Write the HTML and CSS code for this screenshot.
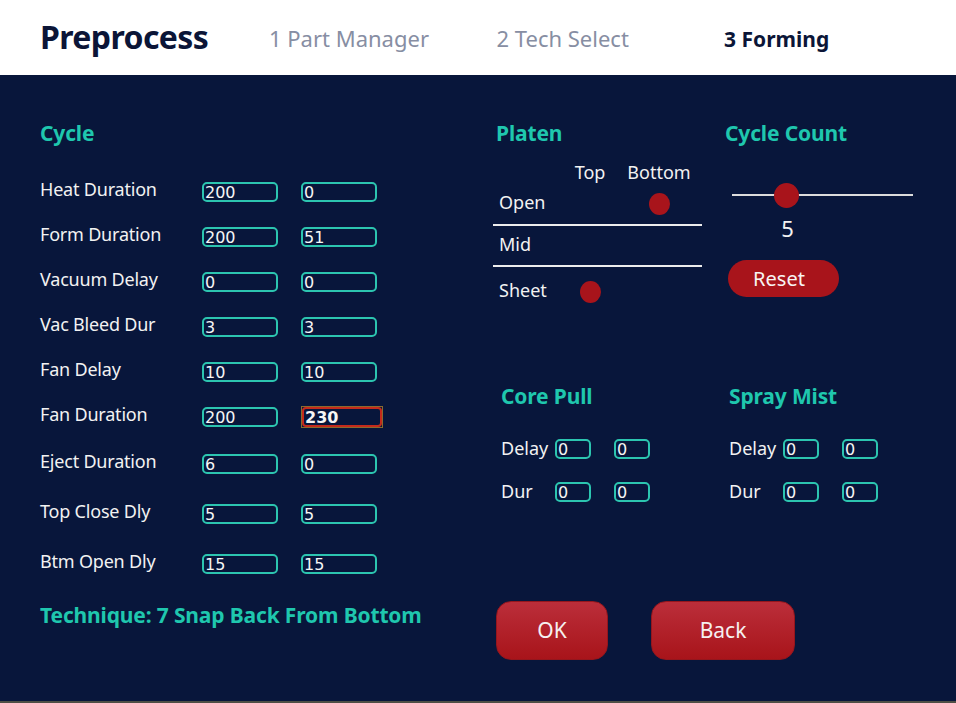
FILE: index.html
```html
<!DOCTYPE html>
<html lang="en">
<head>
<meta charset="utf-8">
<title>Preprocess - Forming</title>
<link rel="stylesheet" href="styles.css">
</head>
<body>
<header class="topbar">
  <h1 class="brand">Preprocess</h1>
  <nav class="steps">
    <span class="step">1 Part Manager</span>
    <span class="step">2 Tech Select</span>
    <span class="step step-active">3 Forming</span>
  </nav>
</header>
<main class="panel">
  <section class="cycle">
    <h2 class="section-title">Cycle</h2>
    <div class="cycle-rows">
      <div class="field-row"><span class="field-label">Heat Duration</span><input class="num" value="200" readonly><input class="num" value="0" readonly></div>
      <div class="field-row"><span class="field-label">Form Duration</span><input class="num" value="200" readonly><input class="num" value="51" readonly></div>
      <div class="field-row"><span class="field-label">Vacuum Delay</span><input class="num" value="0" readonly><input class="num" value="0" readonly></div>
      <div class="field-row"><span class="field-label">Vac Bleed Dur</span><input class="num" value="3" readonly><input class="num" value="3" readonly></div>
      <div class="field-row"><span class="field-label">Fan Delay</span><input class="num" value="10" readonly><input class="num" value="10" readonly></div>
      <div class="field-row"><span class="field-label">Fan Duration</span><input class="num" value="200" readonly><span class="focus-ring"><input class="num num-focus" value="230" readonly></span></div>
      <div class="field-row gap-m"><span class="field-label">Eject Duration</span><input class="num" value="6" readonly><input class="num" value="0" readonly></div>
      <div class="field-row gap-l"><span class="field-label">Top Close Dly</span><input class="num" value="5" readonly><input class="num" value="5" readonly></div>
      <div class="field-row gap-l"><span class="field-label">Btm Open Dly</span><input class="num" value="15" readonly><input class="num" value="15" readonly></div>
    </div>
    <p class="technique">Technique: 7 Snap Back From Bottom</p>
  </section>

  <div class="right">
    <section class="platen">
      <h2 class="section-title">Platen</h2>
      <div class="platen-head">
        <span></span><span class="col-title">Top</span><span class="col-title">Bottom</span>
      </div>
      <div class="platen-row row-open">
        <span class="platen-label">Open</span><span></span><span class="dot"></span>
      </div>
      <div class="platen-line line-1"></div>
      <div class="platen-row row-mid">
        <span class="platen-label">Mid</span>
      </div>
      <div class="platen-line line-2"></div>
      <div class="platen-row row-sheet">
        <span class="platen-label">Sheet</span><span class="dot"></span>
      </div>
    </section>

    <section class="count">
      <h2 class="section-title">Cycle Count</h2>
      <div class="slider"><span class="thumb"></span></div>
      <div class="count-value">5</div>
      <button class="reset-btn" type="button">Reset</button>
    </section>

    <section class="mini mini-core">
      <h2 class="section-title">Core Pull</h2>
      <div class="mini-rows">
        <div class="mini-row"><span class="mini-label">Delay</span><input class="num num-sm" value="0" readonly><input class="num num-sm" value="0" readonly></div>
        <div class="mini-row"><span class="mini-label">Dur</span><input class="num num-sm" value="0" readonly><input class="num num-sm" value="0" readonly></div>
      </div>
    </section>

    <section class="mini mini-spray">
      <h2 class="section-title">Spray Mist</h2>
      <div class="mini-rows">
        <div class="mini-row"><span class="mini-label">Delay</span><input class="num num-sm" value="0" readonly><input class="num num-sm" value="0" readonly></div>
        <div class="mini-row"><span class="mini-label">Dur</span><input class="num num-sm" value="0" readonly><input class="num num-sm" value="0" readonly></div>
      </div>
    </section>

    <div class="actions">
      <button class="big-btn btn-ok" type="button">OK</button>
      <button class="big-btn btn-back" type="button">Back</button>
    </div>
  </div>
</main>
</body>
</html>
```
FILE: styles.css
```css
* { box-sizing: border-box; }

html, body {
  margin: 0;
  padding: 0;
}

body {
  width: 956px;
  height: 703px;
  background: #4e4e45;
  font-family: "Noto Sans", "Open Sans", sans-serif;
  overflow: hidden;
}

/* ---------- header ---------- */
.topbar {
  height: 75px;
  background: #ffffff;
  display: flex;
  align-items: flex-start;
  padding: 17px 0 0 40px;
}

.brand {
  width: 229px;
  margin: 0;
  font-size: 32px;
  line-height: 40px;
  font-weight: 700;
  letter-spacing: -0.6px;
  color: #0b1537;
}

.steps {
  display: flex;
}

.step {
  width: 227.5px;
  margin-top: 7px;
  font-size: 22px;
  line-height: 28px;
  color: #878ea3;
}

.step-active {
  font-size: 21px;
  margin-top: 7.5px;
  font-weight: 700;
  color: #0b1537;
}

/* ---------- panel ---------- */
.panel {
  height: 626px;
  background: #08163b;
  display: flex;
  padding: 46px 0 0 40px;
  color: #f2f2f2;
}

.section-title {
  margin: 0;
  font-size: 21px;
  line-height: 24px;
  font-weight: 700;
  letter-spacing: -0.15px;
  color: #1fc7ae;
}

/* ---------- cycle ---------- */
.cycle {
  width: 456px;
}

.cycle-rows {
  margin-top: 37px;
  display: flex;
  flex-direction: column;
  gap: 25px;
}

.field-row {
  display: flex;
  align-items: flex-start;
  height: 20px;
}

.gap-m { margin-top: 2px; }
.gap-l { margin-top: 5px; }

.field-label {
  width: 162px;
  margin-top: -3px;
  font-size: 18px;
  line-height: 20px;
  letter-spacing: -0.2px;
}

.num {
  width: 76px;
  height: 20px;
  margin: 0;
  padding: 0 1px;
  border: 2px solid #2cc5b0;
  border-radius: 5px;
  background: transparent;
  color: #f6f6f6;
  font-family: "DejaVu Sans", sans-serif;
  font-size: 16px;
  outline: none;
}

.num + .num,
.num + .focus-ring {
  margin-left: 23px;
}

.focus-ring {
  display: flex;
  margin-top: -1px;
  border: 1px solid #8a6a2e;
}

.num-focus {
  width: 80px;
  border-color: #c52a1b;
  border-radius: 4px;
  font-weight: 700;
}

.technique {
  margin: 29px 0 0;
  font-size: 21px;
  line-height: 24px;
  font-weight: 700;
  letter-spacing: -0.15px;
  color: #1fc7ae;
}

/* ---------- right area ---------- */
.right {
  display: grid;
  grid-template-columns: 229px 210px;
  align-content: start;
}

/* platen */
.platen-head,
.platen-row {
  display: grid;
  grid-template-columns: 59px 70px 68px;
}

.platen-head {
  margin-top: 16px;
  font-size: 18px;
  line-height: 22px;
  height: 22px;
}

.col-title {
  text-align: center;
}

.platen-row {
  height: 26px;
  font-size: 18px;
  line-height: 26px;
}

.platen-label {
  padding-left: 3px;
}

.row-open { margin-top: 6px; }
.row-mid { margin-top: 5px; }
.row-sheet { margin-top: 10px; }

.dot {
  justify-self: center;
  align-self: end;
  width: 21px;
  height: 22px;
  border-radius: 50%;
  background: #a8141b;
}

.platen-line {
  width: 209px;
  height: 2px;
  margin-left: -3px;
  background: #ececec;
}

.line-1 { margin-top: 9px; }
.line-2 { margin-top: 8px; }

/* cycle count */
.slider {
  position: relative;
  width: 181px;
  height: 2px;
  margin: 49px 0 0 7px;
  background: #dcdcdc;
}

.thumb {
  position: absolute;
  left: 42px;
  top: -11.5px;
  width: 25px;
  height: 25px;
  border-radius: 50%;
  background: #a8141b;
}

.count-value {
  width: 125px;
  margin-top: 19px;
  text-align: center;
  font-size: 22px;
  line-height: 26px;
}

.reset-btn {
  display: block;
  width: 111px;
  height: 37px;
  margin: 19px 0 0 3px;
  padding: 0 9px 0 0;
  border: none;
  border-radius: 18.5px;
  background: #a8141b;
  color: #f8f4f4;
  font-family: "Noto Sans", sans-serif;
  font-size: 20px;
  line-height: 33px;
  text-align: center;
}

/* core pull / spray mist */
.mini {
  margin-top: 81px;
}

.mini-core { padding-left: 5px; }
.mini-spray { padding-left: 4px; }

.mini-rows {
  margin-top: 31px;
  display: flex;
  flex-direction: column;
  gap: 23px;
}

.mini-row {
  display: flex;
  align-items: flex-start;
  height: 20px;
}

.mini-label {
  width: 54px;
  margin-top: -1px;
  font-size: 18px;
  line-height: 20px;
}

.num-sm {
  width: 36px;
}

/* actions */
.actions {
  grid-column: 1 / -1;
  margin-top: 99px;
  display: flex;
  gap: 43px;
}

.big-btn {
  height: 59px;
  padding: 0;
  border: 1px solid #95161d;
  border-radius: 15px;
  background: linear-gradient(#bb2e3a, #a8141a);
  color: #f6f0f0;
  font-family: "Noto Sans", sans-serif;
  font-size: 21px;
  line-height: 57px;
  text-align: center;
}

.btn-ok { width: 112px; }
.btn-back { width: 144px; }
```
